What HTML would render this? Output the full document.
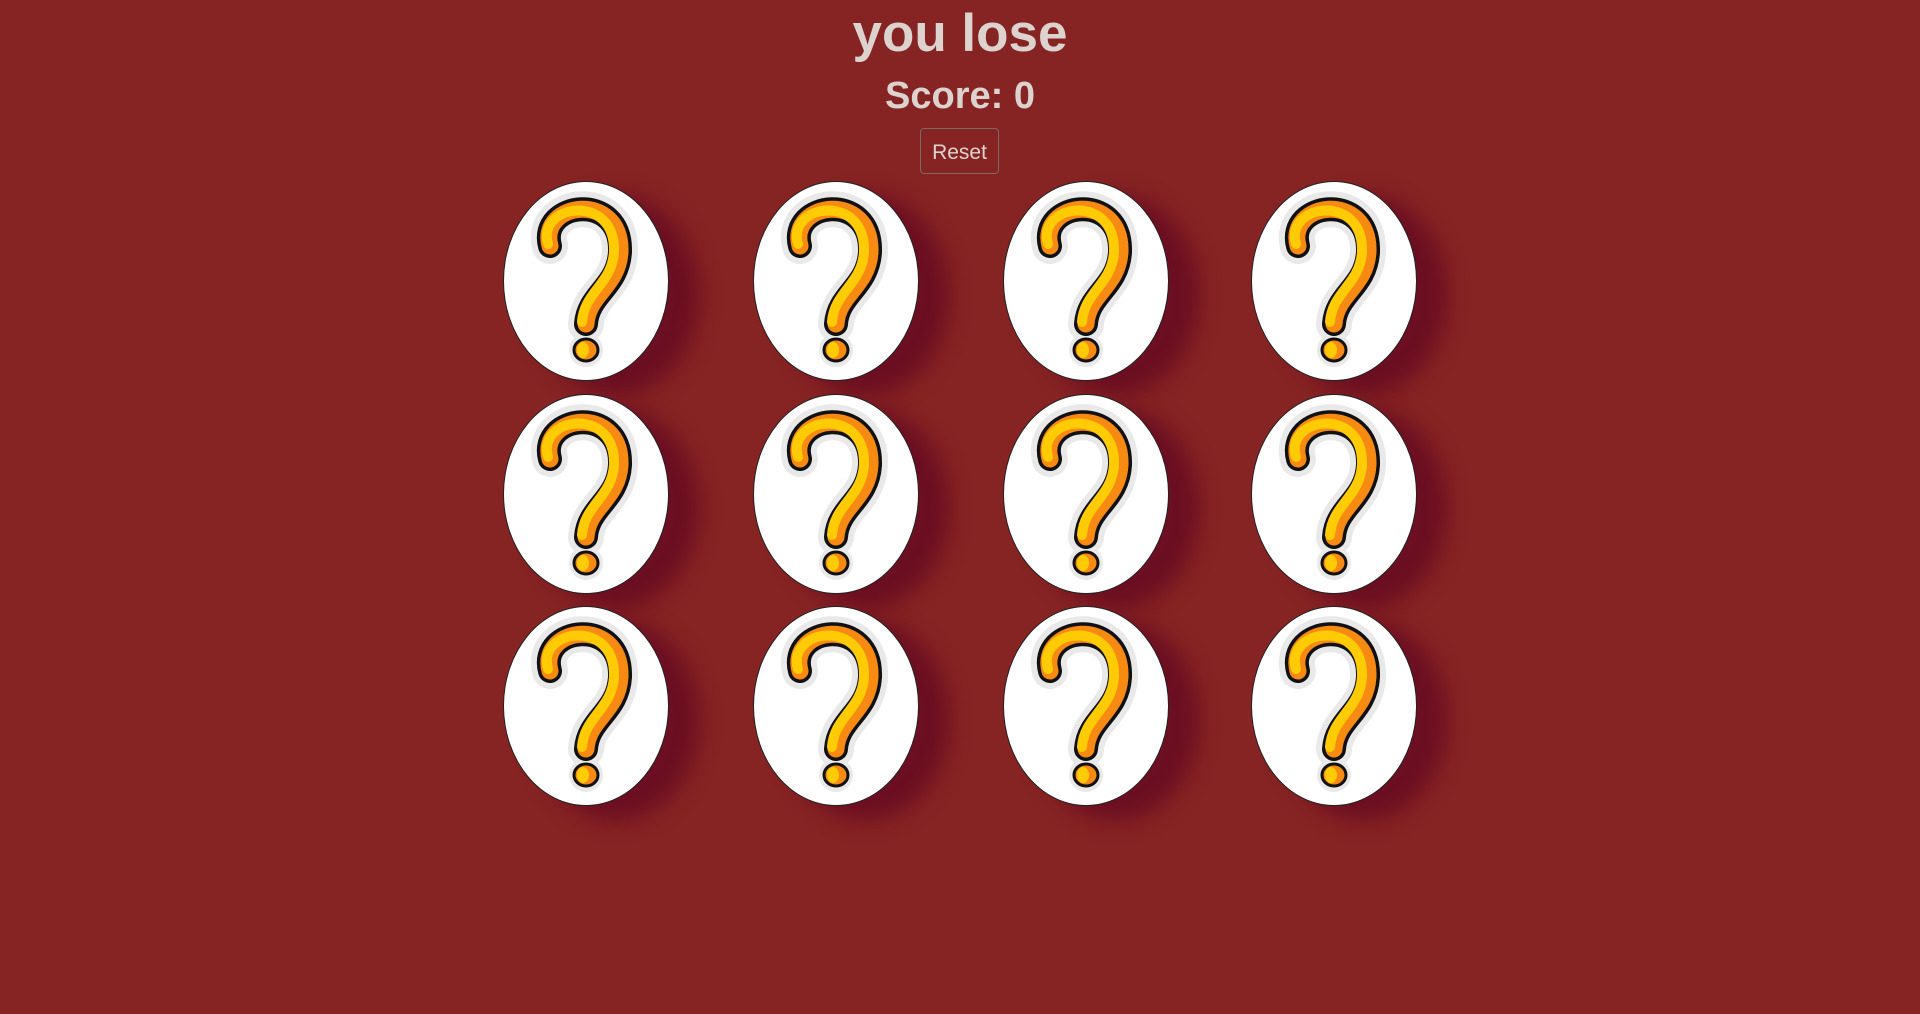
<!DOCTYPE html>
<html><head><meta charset="utf-8"><style>
body{margin:0;width:1920px;height:1014px;background:#862323;font-family:"Liberation Sans",sans-serif;overflow:hidden;position:relative}
h1{position:absolute;top:2px;left:0;width:1920px;text-align:center;margin:0;font-size:53px;font-weight:bold;color:#dcd3cf;line-height:64px}
h2{position:absolute;top:70px;left:0;width:1920px;text-align:center;margin:0;font-size:38px;font-weight:bold;color:#dcd3cf;line-height:52px}
.btn{position:absolute;left:920px;top:128px;width:79px;height:46px;border:1px solid #7a6a66;border-radius:4px;color:#dcd3cf;font-size:21px;line-height:48px;text-align:center;box-sizing:border-box}
.card{position:absolute;width:166px;height:200px;border-radius:50%;background:#fff;border:1px solid #222;box-sizing:border-box;box-shadow:30px 14px 20px #6c0f22}
.card svg{position:absolute;left:0;top:0}
</style></head><body>
<h1>you lose</h1>
<h2>Score: 0</h2>
<div class="btn">Reset</div>
<svg width="0" height="0" style="position:absolute"><defs>
<g id="q">
<path d="M46 64 C34 20,118 8,116 70 C114 105,84 112,82 142" fill="none" stroke="#e9e9e9" stroke-width="36" stroke-linecap="round"/>
<circle cx="82" cy="168" r="17" fill="#e9e9e9"/>
<path d="M46 64 C34 20,118 8,116 70 C114 105,84 112,82 142" fill="none" stroke="#111" stroke-width="24" stroke-linecap="round"/>
<path d="M46 64 C34 20,118 8,116 70 C114 105,84 112,82 142" fill="none" stroke="#f78a12" stroke-width="17" stroke-linecap="round"/>
<path d="M44 62 C32 22,112 10,110 70 C108 102,80 110,78 140" fill="none" stroke="#ffcb05" stroke-width="10" stroke-linecap="round"/>
<ellipse cx="82" cy="168" rx="12" ry="11" fill="#f78a12" stroke="#111" stroke-width="3"/>
<ellipse cx="79" cy="168" rx="6" ry="8" fill="#ffcb05"/>
</g></defs></svg>
<div class="card" style="left:503px;top:181px"><svg width="166" height="200"><use href="#q"/></svg></div>
<div class="card" style="left:753px;top:181px"><svg width="166" height="200"><use href="#q"/></svg></div>
<div class="card" style="left:1003px;top:181px"><svg width="166" height="200"><use href="#q"/></svg></div>
<div class="card" style="left:1251px;top:181px"><svg width="166" height="200"><use href="#q"/></svg></div>
<div class="card" style="left:503px;top:394px"><svg width="166" height="200"><use href="#q"/></svg></div>
<div class="card" style="left:753px;top:394px"><svg width="166" height="200"><use href="#q"/></svg></div>
<div class="card" style="left:1003px;top:394px"><svg width="166" height="200"><use href="#q"/></svg></div>
<div class="card" style="left:1251px;top:394px"><svg width="166" height="200"><use href="#q"/></svg></div>
<div class="card" style="left:503px;top:606px"><svg width="166" height="200"><use href="#q"/></svg></div>
<div class="card" style="left:753px;top:606px"><svg width="166" height="200"><use href="#q"/></svg></div>
<div class="card" style="left:1003px;top:606px"><svg width="166" height="200"><use href="#q"/></svg></div>
<div class="card" style="left:1251px;top:606px"><svg width="166" height="200"><use href="#q"/></svg></div>
</body></html>
